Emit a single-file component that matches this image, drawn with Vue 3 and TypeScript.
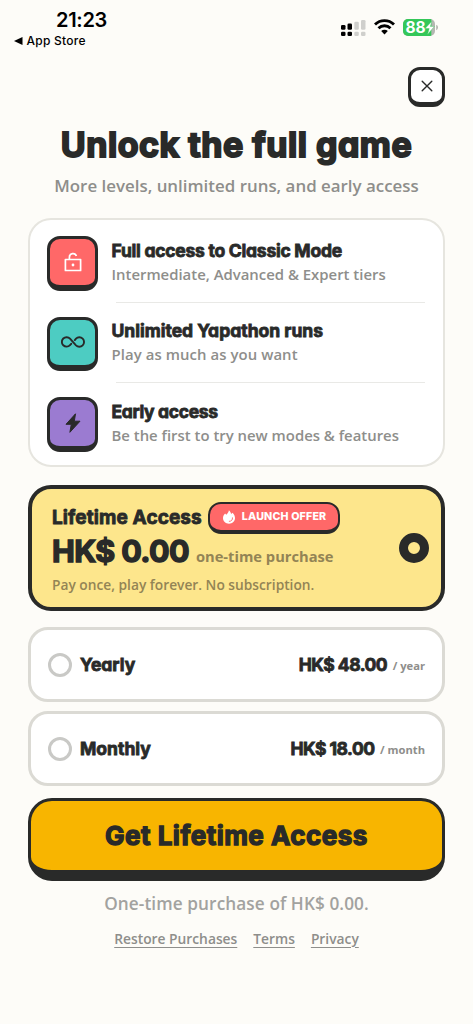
<script setup lang="ts">
interface Feature { key: string; title: string; text: string }
interface Plan { key: string; name: string; price: string; period: string }

const features: Feature[] = [
  { key: 'classic', title: 'Full access to Classic Mode', text: 'Intermediate, Advanced & Expert tiers' },
  { key: 'yapathon', title: 'Unlimited Yapathon runs', text: 'Play as much as you want' },
  { key: 'early', title: 'Early access', text: 'Be the first to try new modes & features' },
]
const plans: Plan[] = [
  { key: 'yearly', name: 'Yearly', price: 'HK$ 48.00', period: '/ year' },
  { key: 'monthly', name: 'Monthly', price: 'HK$ 18.00', period: '/ month' },
]
</script>

<template>
  <main class="screen">
    <header class="status">
      <div class="clock">
        <span class="time">21:23</span>
        <span class="back"><svg width="9" height="8" viewBox="0 0 9 8"><path d="M0 4 8.5 0v8z" /></svg><span class="back-label">App Store</span></span>
      </div>
      <div class="indicators">
        <svg class="signal" width="25" height="18" viewBox="0 0 25 18">
          <g fill="#000"><rect x="0" y="6" width="4.5" height="4.8" rx="1.3" /><rect x="6.5" y="4.5" width="4.5" height="6.3" rx="1.3" /><rect x="0" y="12.8" width="4.5" height="4.2" rx="1.3" /><rect x="6.5" y="12.8" width="4.5" height="4.2" rx="1.3" /></g>
          <g fill="#cfcfcc"><rect x="13.3" y="2.7" width="4.5" height="8.1" rx="1.3" /><rect x="20" y="1" width="4.5" height="9.8" rx="1.3" /><rect x="13.3" y="12.8" width="4.5" height="4.2" rx="1.3" /><rect x="20" y="12.8" width="4.5" height="4.2" rx="1.3" /></g>
        </svg>
        <svg class="wifi" width="21" height="16" viewBox="0 0 21 16" fill="none" stroke="#000" stroke-width="2.9">
          <path d="M1 5.5a13.6 13.6 0 0 1 19 0" /><path d="M4.5 9.2a8.6 8.6 0 0 1 12 0" /><path d="M10.5 15.5 7.2 12.1a4.7 4.7 0 0 1 6.6 0z" fill="#000" stroke="none" />
        </svg>
        <svg class="battery" width="36" height="17" viewBox="0 0 36 17">
          <defs><clipPath id="cell"><rect width="32" height="17" rx="5" /></clipPath></defs>
          <g clip-path="url(#cell)"><rect width="32" height="17" fill="#b5b7b2" /><rect width="28.3" height="17" fill="#34c759" /></g>
          <path d="M33.2 5.8c2.4.9 2.4 4.5 0 5.4z" fill="#b5b7b2" />
          <text x="2.4" y="14" class="charge">88</text>
          <path d="M28.8 2.3 22 9.6h4.2l-1.7 5.8 6.9-8h-4z" fill="#fff" stroke="#34c759" stroke-width=".4" />
        </svg>
      </div>
    </header>

    <div class="close-row">
      <button class="close" aria-label="Close"><svg width="12" height="12" viewBox="0 0 12 12"><path d="m1.2 1.2 9.6 9.6M10.8 1.2l-9.6 9.6" /></svg></button>
    </div>

    <h1 class="title">Unlock the full game</h1>
    <p class="subtitle">More levels, unlimited runs, and early access</p>

    <section class="features">
      <div v-for="f in features" :key="f.key" class="feature" :class="f.key">
        <div class="tile">
          <svg v-if="f.key === 'classic'" width="20" height="22" viewBox="0 0 20 22" fill="none" stroke="#fff" stroke-width="1.7" stroke-linejoin="round"><path d="M2.4 8.5h15.2v11H2.4zM6.4 8.5V6.2a3.6 3.6 0 0 1 7-1.2" /><circle cx="10" cy="14" r="1.4" fill="#fff" stroke="none" /></svg>
          <svg v-else-if="f.key === 'yapathon'" width="24" height="14" viewBox="0 0 24 14" fill="none" stroke="#292a29" stroke-width="1.9" stroke-linecap="round"><path d="M10.2 8.8 9 10.1A4.7 4.7 0 1 1 9 3.7l6 6.6a4.7 4.7 0 1 0 0-6.6l-1.2 1.4" /></svg>
          <svg v-else width="16" height="20" viewBox="0 0 16 20" fill="#292a29" stroke="#292a29" stroke-linejoin="round"><path d="M10.5.8 1 11.3h5.3l-1.4 8L15 8.2H9.3z" /></svg>
        </div>
        <div class="copy">
          <h2>{{ f.title }}</h2>
          <p>{{ f.text }}</p>
        </div>
      </div>
    </section>

    <section class="lifetime">
      <div class="offer">
        <div class="offer-head">
          <h3>Lifetime Access</h3>
          <span class="badge"><svg width="12" height="14" viewBox="0 0 12 14"><path d="M5.9.2C7.4 1.6 8 2.7 8.1 4.1L9.5 2.7C11.2 4.4 12 6.1 12 8.1c0 3.3-2.6 5.7-6 5.7S0 11.4 0 8.1c0-2 .9-3.4 2.1-4.7l1.2 1.3C4.7 3.6 5.5 2.2 5.9.2z" fill="#fff" /><path d="M9.5 7.8c.3 2-1 3.5-3.2 3.6" fill="none" stroke="#ff6868" stroke-width=".9" stroke-linecap="round" /></svg><span class="badge-text">LAUNCH OFFER</span></span>
        </div>
        <div class="offer-price"><strong>HK$ 0.00</strong><span>one-time purchase</span></div>
        <p>Pay once, play forever. No subscription.</p>
      </div>
      <span class="picked"></span>
    </section>

    <section v-for="p in plans" :key="p.key" class="plan" :class="p.key">
      <span class="radio"></span>
      <h3>{{ p.name }}</h3>
      <strong>{{ p.price }}</strong>
      <span class="period">{{ p.period }}</span>
    </section>

    <button class="cta">Get Lifetime Access</button>
    <p class="note">One-time purchase of HK$ 0.00.</p>
    <nav class="links"><a>Restore Purchases</a><a>Terms</a><a>Privacy</a></nav>
  </main>
</template>

<style>
body { margin: 0; background: #fdfcf8; }
</style>

<style scoped>
* { box-sizing: border-box; }
h1, h2, h3, p { margin: 0; }
.screen { width: 473px; height: 1024px; padding: 0 28px; overflow: hidden; background: #fdfcf8; color: #292a29; font-family: "Open Sans", "Noto Sans", sans-serif; font-weight: 600; white-space: nowrap; font-variant-ligatures: none; }
h1, h2, h3, strong, .cta { font-family: Inter, sans-serif; font-weight: 700; font-feature-settings: "cv11"; -webkit-text-stroke: .8px currentColor; stroke-linejoin: round; paint-order: stroke fill; }
.status { display: flex; justify-content: space-between; height: 67px; margin: 0 -19px 0 -14px; font-family: Inter, sans-serif; color: #000; }
.clock { display: flex; flex-direction: column; }
.time { padding: 8px 0 0 42px; font-size: 20px; line-height: 24px; font-weight: 600; letter-spacing: -.3px; }
.back { display: flex; align-items: center; gap: 3.5px; margin-top: 2px; line-height: 14px; }
.back-label { font-size: 12px; font-weight: 500; letter-spacing: .25px; }
.indicators { display: flex; align-items: flex-start; margin-right: 25.5px; padding-top: 19px; }
.wifi { margin-left: 8px; }
.battery { margin-left: 8px; }
.charge { font: 700 15.5px Inter, sans-serif; fill: #fff; }
.close-row { display: flex; justify-content: flex-end; height: 40px; }
.close { display: grid; place-items: center; width: 37px; height: 40px; padding: 0; border: 3px solid #292a29; border-bottom-width: 5px; border-radius: 12px; background: #fff; }
.close path { fill: none; stroke: #292a29; stroke-width: 1.4; stroke-linecap: round; }
.title { margin-top: 14px; font-size: 34px; line-height: 48px; letter-spacing: .5px; text-align: center; -webkit-text-stroke-width: 1.9px; }
.subtitle { margin-top: 5px; font-size: 16.9px; line-height: 24px; text-align: center; color: #8e8e8b; }
.features { margin-top: 20px; height: 249px; padding: 0 17px; border: 2.5px solid #e6e5df; border-radius: 23px; background: #fff; }
.feature { display: flex; height: 80.7px; padding-top: 16px; }
.feature + .feature { background: linear-gradient(#e9e9e6, #e9e9e6) 69px 1px / 309px 1px no-repeat; }
.tile { display: grid; place-items: center; flex: none; width: 51px; height: 54.5px; border: 3px solid #292a29; border-bottom-width: 6px; border-radius: 13px; background: #ff6868; }
.yapathon .tile { background: #4dccc2; }
.early .tile { background: #9b7bd1; }
.copy { flex: 1; margin-left: 13.5px; padding-top: 1.6px; }
.copy h2 { font-size: 17.5px; line-height: 25px; }
.classic h2 { letter-spacing: -.25px; }
.early h2 { letter-spacing: -.35px; }
.copy p { font-size: 14.9px; line-height: 22px; color: #8e8e8b; }
.yapathon .copy p { letter-spacing: .08px; }
.lifetime { display: flex; justify-content: space-between; align-items: center; height: 126px; margin-top: 18px; padding: 0 12px 0 20px; border: 4px solid #292a29; border-radius: 23px; background: #fde68c; }
.offer { padding-top: 2px; }
.offer-head { display: flex; align-items: center; gap: 6px; height: 32px; }
.offer-head h3 { font-size: 19px; letter-spacing: .1px; }
.badge { display: flex; align-items: center; gap: 7px; height: 32px; width: 132px; padding-left: 13px; border: 2px solid #292a29; border-bottom-width: 4px; border-radius: 13px; background: #ff6868; color: #fff; }
.badge-text { font: 800 10.7px Inter, sans-serif; letter-spacing: .15px; }
.offer-price { display: flex; align-items: baseline; gap: 7px; height: 36px; line-height: 34px; }
.offer-price strong { font-size: 30.5px; letter-spacing: -.6px; -webkit-text-stroke-width: 1.4px; }
.offer-price span { font-size: 14.7px; color: #938455; font-weight: 700; }
.offer p { margin-top: 3px; font-size: 13.75px; line-height: 24px; color: #938455; }
.picked { width: 30px; height: 30px; border: 9.5px solid #292a29; border-radius: 50%; }
.plan { display: flex; align-items: center; height: 75px; margin-top: 16px; padding: 1px 17px 0; border: 3px solid #dbdad4; border-radius: 20px; background: #fff; }
.lifetime + .plan { margin-top: 15.5px; }
.plan + .plan { margin-top: 9px; }
.radio { width: 24px; height: 24px; border: 3px solid #c9c9c6; border-radius: 50%; }
.plan h3 { margin: 0 auto 0 8px; font-size: 17.5px; }
.plan strong { font-size: 17.5px; letter-spacing: -.5px; }
.period { margin-left: 5.5px; padding-top: 2px; font-size: 11.2px; font-weight: 700; color: #8e8e8b; }
.cta { display: block; width: 100%; height: 83px; margin-top: 12px; padding: 1px 0 0; border: 3.5px solid #292a29; border-bottom-width: 11px; border-radius: 24px; background: #f8b500; color: #292a29; font-size: 26px; letter-spacing: .48px; -webkit-text-stroke-width: 1.3px; }
.note { margin-top: 10px; font-size: 17.2px; line-height: 26px; letter-spacing: .1px; text-align: center; color: #a2a29f; }
.links { display: flex; justify-content: center; gap: 16px; margin-top: 12px; font-size: 13.8px; line-height: 20px; color: #8e8e8b; }
.links a { text-decoration: underline; text-underline-offset: 3px; text-decoration-thickness: 1px; }
</style>
